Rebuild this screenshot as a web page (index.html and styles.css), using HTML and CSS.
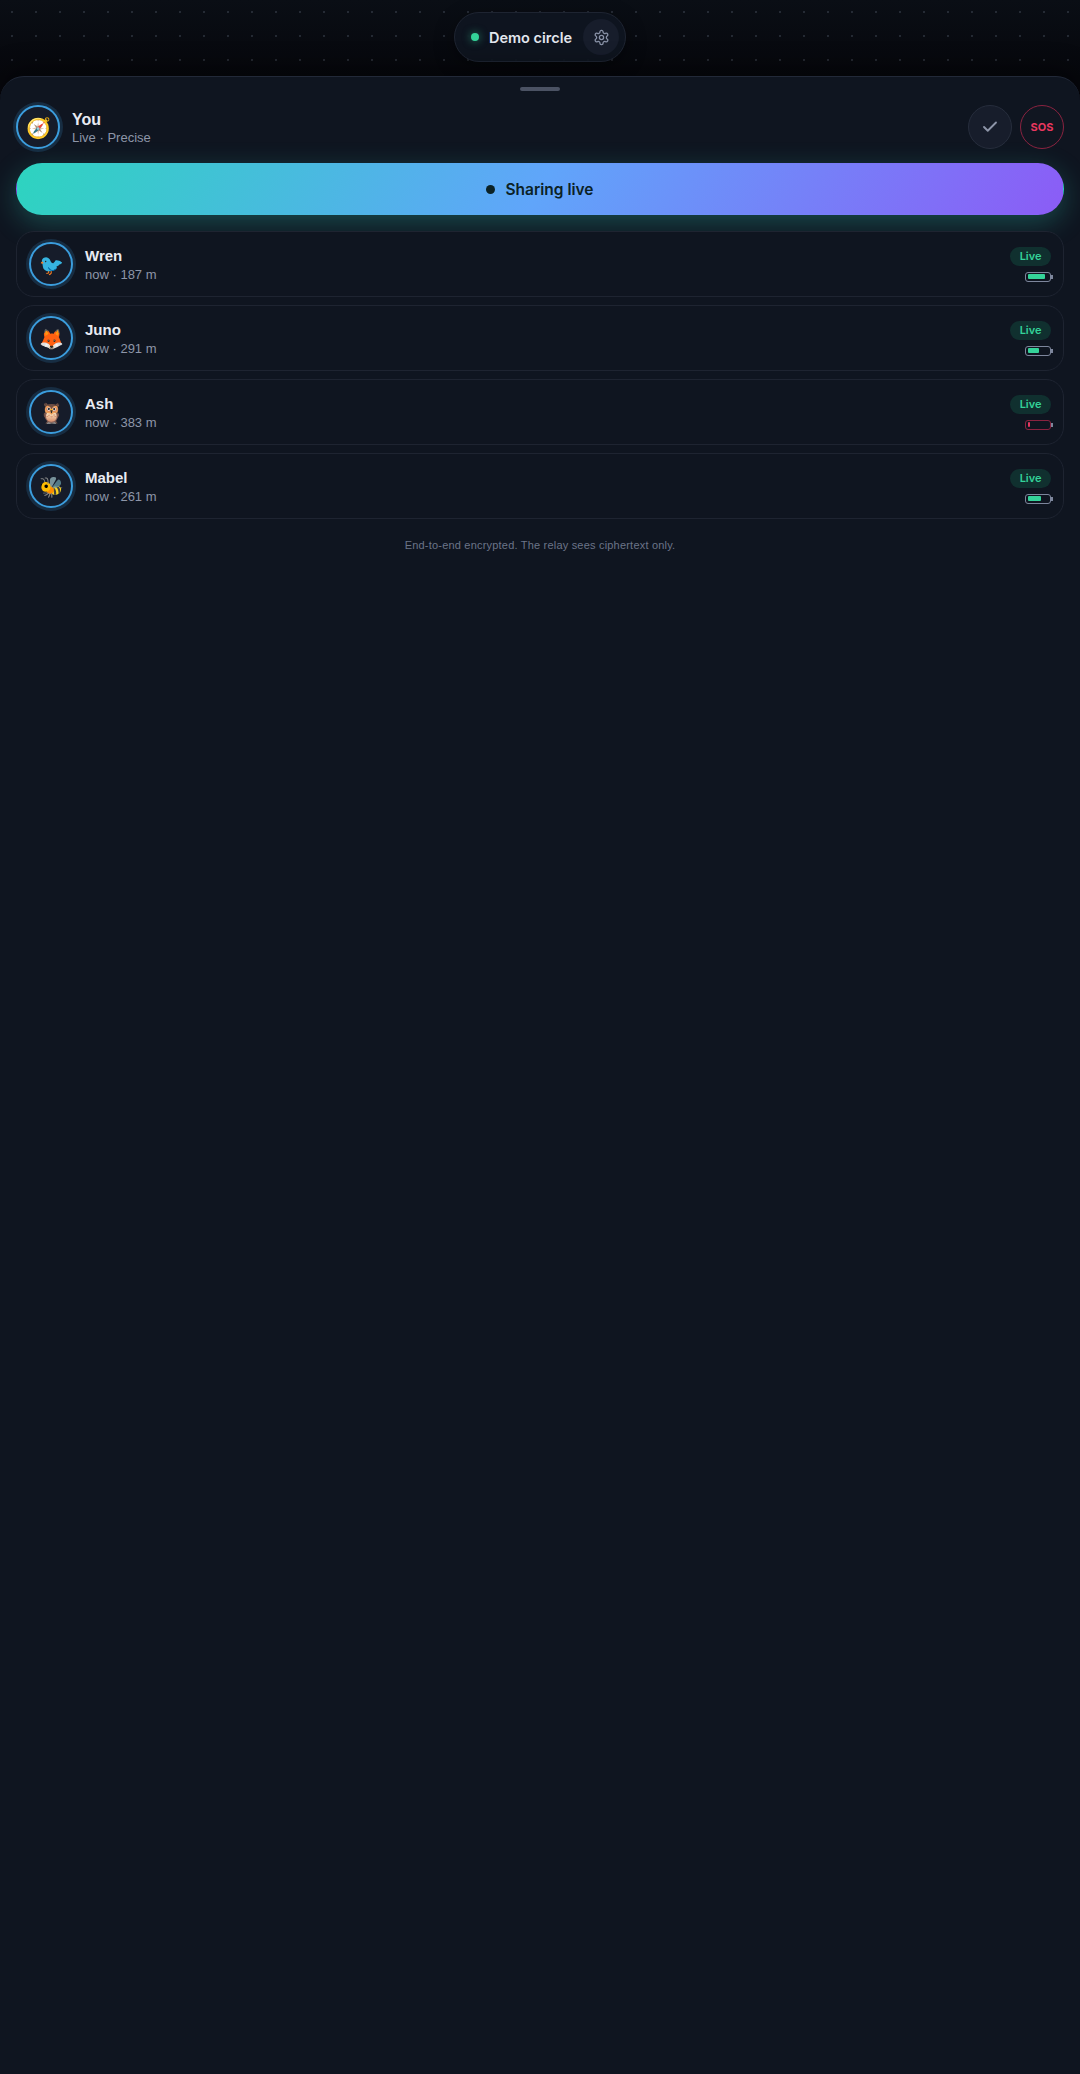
FILE: index.html
```html
<!DOCTYPE html>
<html lang="en">
<head>
<meta charset="utf-8">
<title>Demo circle</title>
<link rel="stylesheet" href="styles.css">
</head>
<body>
<div class="app">
  <header class="map">
    <div class="pill">
      <span class="pill-dot"></span>
      <span class="pill-name">Demo circle</span>
      <button class="gear" aria-label="Settings">
        <svg width="17" height="17" viewBox="0 0 24 24" fill="none" stroke="currentColor" stroke-width="1.8" stroke-linecap="round" stroke-linejoin="round"><path d="M12.22 2h-.44a2 2 0 0 0-2 2v.18a2 2 0 0 1-1 1.73l-.43.25a2 2 0 0 1-2 0l-.15-.08a2 2 0 0 0-2.73.73l-.22.38a2 2 0 0 0 .73 2.73l.15.1a2 2 0 0 1 1 1.72v.51a2 2 0 0 1-1 1.74l-.15.09a2 2 0 0 0-.73 2.73l.22.38a2 2 0 0 0 2.73.73l.15-.08a2 2 0 0 1 2 0l.43.25a2 2 0 0 1 1 1.73V20a2 2 0 0 0 2 2h.44a2 2 0 0 0 2-2v-.18a2 2 0 0 1 1-1.73l.43-.25a2 2 0 0 1 2 0l.15.08a2 2 0 0 0 2.73-.73l.22-.39a2 2 0 0 0-.73-2.73l-.15-.08a2 2 0 0 1-1-1.74v-.5a2 2 0 0 1 1-1.74l.15-.09a2 2 0 0 0 .73-2.73l-.22-.38a2 2 0 0 0-2.73-.73l-.15.08a2 2 0 0 1-2 0l-.43-.25a2 2 0 0 1-1-1.73V4a2 2 0 0 0-2-2z"/><circle cx="12" cy="12" r="3"/></svg>
      </button>
    </div>
  </header>
  <main class="sheet">
    <div class="handle"></div>
    <section class="me">
      <div class="avatar"><span class="emoji">🧭</span></div>
      <div class="who">
        <div class="me-name">You</div>
        <div class="sub">Live · Precise</div>
      </div>
      <button class="round check" aria-label="Check in">
        <svg width="18" height="18" viewBox="0 0 24 24" fill="none" stroke="currentColor" stroke-width="2.5" stroke-linecap="round" stroke-linejoin="round"><path d="M20 6 9 17l-5-5"/></svg>
      </button>
      <button class="round sos">SOS</button>
    </section>
    <button class="share"><span class="share-dot"></span>Sharing live</button>
    <ul class="list">
      <li class="card">
        <div class="avatar"><span class="emoji">🐦</span></div>
        <div class="who"><div class="name">Wren</div><div class="sub">now · 187 m</div></div>
        <div class="status"><span class="live">Live</span><span class="batt"><span class="lvl" style="width:85%"></span></span></div>
      </li>
      <li class="card">
        <div class="avatar"><span class="emoji">🦊</span></div>
        <div class="who"><div class="name">Juno</div><div class="sub">now · 291 m</div></div>
        <div class="status"><span class="live">Live</span><span class="batt"><span class="lvl" style="width:55%"></span></span></div>
      </li>
      <li class="card">
        <div class="avatar"><span class="emoji">🦉</span></div>
        <div class="who"><div class="name">Ash</div><div class="sub">now · 383 m</div></div>
        <div class="status"><span class="live">Live</span><span class="batt low"><span class="lvl" style="width:10%"></span></span></div>
      </li>
      <li class="card">
        <div class="avatar"><span class="emoji">🐝</span></div>
        <div class="who"><div class="name">Mabel</div><div class="sub">now · 261 m</div></div>
        <div class="status"><span class="live">Live</span><span class="batt"><span class="lvl" style="width:65%"></span></span></div>
      </li>
    </ul>
    <p class="foot">End-to-end encrypted. The relay sees ciphertext only.</p>
  </main>
</div>
</body>
</html>
```
FILE: styles.css
```css
* { box-sizing: border-box; }
html, body { margin: 0; height: 100%; }
body {
  background: #06070c;
  color: #e8ebf2;
  font-family: "Liberation Sans", Arial, sans-serif;
}
button { font: inherit; color: inherit; padding: 0; cursor: pointer; }
.app { height: 2074px; display: flex; flex-direction: column; overflow: hidden; }
.map {
  height: 76px;
  flex: none;
  display: flex;
  justify-content: center;
  padding-top: 12px;
  background-color: #07090f;
  background-image:
    radial-gradient(circle at 12px 12px, rgba(148,163,184,.2) .9px, transparent 1.2px),
    linear-gradient(#0a0e15, #06070c);
  background-size: 24px 24px, auto;
}
.pill {
  height: 50px;
  display: flex;
  align-items: center;
  padding: 0 6px 0 16px;
  border-radius: 25px;
  background: rgba(15,21,32,.94);
  border: 1px solid #1e2431;
  box-shadow: 0 6px 20px rgba(0,0,0,.35);
}
.pill-dot {
  width: 8px; height: 8px; border-radius: 50%;
  background: #34d399;
  box-shadow: 0 0 8px rgba(52,211,153,.6);
}
.pill-name {
  margin-left: 10px;
  font-family: Inter, "Liberation Sans", sans-serif;
  font-size: 14.5px;
  font-weight: 600;
  color: #e2e6ee;
}
.gear {
  width: 36px; height: 36px; margin-left: 11px;
  border: 0; border-radius: 50%;
  background: #171d2b;
  color: #8a93a8;
  display: flex; align-items: center; justify-content: center;
}
.sheet {
  flex: 1;
  background: #0f1520;
  border-top: 1px solid #222938;
  border-radius: 24px 24px 0 0;
  padding: 10px 16px 0;
  box-shadow: 0 -8px 24px rgba(0,0,0,.35);
}
.handle { width: 40px; height: 4px; border-radius: 2px; background: #4b5263; margin: 0 auto 14px; }
.me { display: flex; align-items: center; gap: 8px; height: 44px; }
.who { flex: 1; min-width: 0; margin-left: 4px; padding-top: 2px; }
.avatar {
  width: 44px; height: 44px; flex: none;
  border-radius: 50%;
  border: 2px solid #3b9ddd;
  box-shadow: 0 0 0 3px rgba(59,157,221,.18);
  background: #161c2a;
  display: flex; align-items: center; justify-content: center;
}
.emoji { font-size: 20px; line-height: 1; position: relative; top: 1px; }
.me-name { font-size: 16px; font-weight: 700; line-height: 19px; color: #e8ebf2; }
.name { font-size: 15px; font-weight: 700; line-height: 17px; margin-bottom: 2px; color: #e8ebf2; }
.sub { font-size: 13px; line-height: 18px; color: #8d95a8; }
.round {
  width: 44px; height: 44px; flex: none;
  border-radius: 50%;
  display: flex; align-items: center; justify-content: center;
  background: #171d2b;
}
.check { border: 1px solid #262d3c; color: #8d95a8; }
.sos {
  border: 1px solid #8a2340;
  color: #e8375f;
  font-family: Inter, "Liberation Sans", sans-serif;
  font-size: 11px;
  font-weight: 700;
  background: #111621;
}
.share {
  display: flex; align-items: center; justify-content: center; gap: 10px;
  width: 100%; height: 52px; margin-top: 14px;
  border: 1px solid transparent;
  border-radius: 26px;
  background: linear-gradient(120deg, #2dd4bf 0%, #60a5fa 50%, #8b5cf6 100%);
  box-shadow: 0 8px 28px rgba(45,212,191,.28);
  color: #0b2226;
  font-family: Inter, "Liberation Sans", sans-serif;
  font-size: 15.5px;
  font-weight: 600;
}
.share-dot { width: 9px; height: 9px; border-radius: 50%; background: #0b2226; }
.list { list-style: none; margin: 16px 0 0; padding: 0; display: flex; flex-direction: column; gap: 8px; }
.card {
  height: 66px;
  display: flex; align-items: center; gap: 8px;
  padding: 0 12px;
  border: 1px solid #1e2431;
  border-radius: 18px;
  background: #0f1520;
}
.status { display: flex; flex-direction: column; align-items: flex-end; gap: 6px; }
.live {
  height: 19px; padding: 0 9.5px;
  border-radius: 10px;
  background: #10302f;
  color: #34d399;
  font-family: Inter, "Liberation Sans", sans-serif;
  font-size: 11px;
  font-weight: 600;
  line-height: 19px;
}
.batt {
  position: relative;
  width: 26px; height: 10px;
  padding: 1.5px 2px;
  border: 1px solid #7d869c;
  border-radius: 3px;
  display: block;
}
.batt::after {
  content: "";
  position: absolute;
  right: -3px; top: 2px;
  width: 2px; height: 4px;
  background: #7d869c;
}
.lvl { display: block; height: 100%; background: #34d399; border-radius: 1px; }
.batt.low { border-color: #8a2340; }
.batt.low .lvl { background: #e8375f; }
.foot {
  margin: 19px 0 0;
  text-align: center;
  font-size: 11px;
  line-height: 14px;
  letter-spacing: .2px;
  color: #6b7488;
}
```
